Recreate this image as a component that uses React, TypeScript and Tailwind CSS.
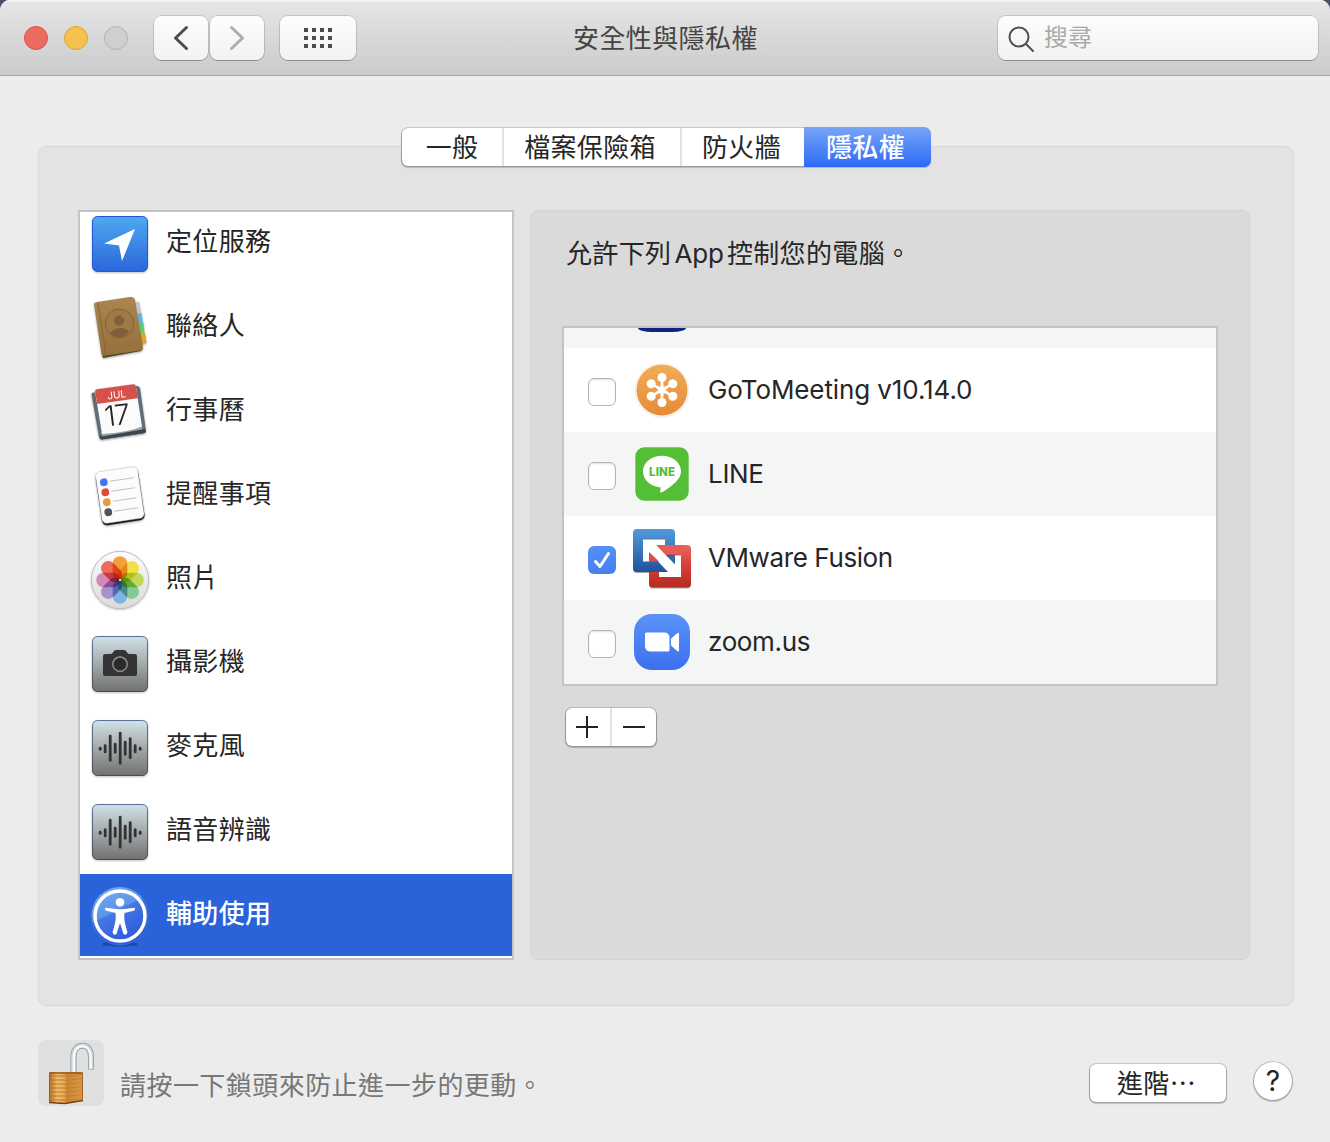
import React from "react";

const FONT = "font-[Inter,'Noto_Sans_CJK_TC',sans-serif]";

function LocationIcon() {
  return (
    <svg width="64" height="64" viewBox="0 0 64 64" className="drop-shadow-[0_1px_1px_rgba(0,0,0,0.25)]">
      <defs>
        <linearGradient id="loc" x1="0" y1="0" x2="0" y2="1">
          <stop offset="0" stopColor="#4fa9ef" />
          <stop offset="1" stopColor="#2a66dc" />
        </linearGradient>
      </defs>
      <rect x="4.500" y="4.500" width="55" height="55" rx="5" fill="url(#loc)" stroke="#2358cc" />
      <path d="M47 17 L16 31.500 L31 33.500 L34 49 Z" fill="#fff" />
    </svg>
  );
}

function ContactsIcon() {
  return (
    <svg width="64" height="64" viewBox="0 2 64 64" className="drop-shadow-[0_1px_1px_rgba(0,0,0,0.35)]">
      <defs>
        <linearGradient id="book" x1="0" y1="0" x2="0" y2="1">
          <stop offset="0" stopColor="#ab8650" />
          <stop offset="1" stopColor="#956f3c" />
        </linearGradient>
      </defs>
      <path d="M44 8 L51 8 L53 19 L48 21 Z" fill="#c3c6c3" />
      <path d="M46 20 L53.500 19 L55 29 L48 31 Z" fill="#5fb4df" />
      <path d="M48 30 L55.500 29 L56.500 39 L50 41 Z" fill="#62cc62" />
      <path d="M49 41 L57 39 L58.500 49 L51 51 Z" fill="#e7a02c" />
      <path d="M14 61 L15 64 L53 57 Q55 56 54 52 Z" fill="#5a4224" />
      <path d="M6 10 Q6 8.500 9 8 L42 3 Q46 2.500 47 6 L55 53 Q55 56 52 56.500 L15 62 Q14 62 13.500 60 Z" fill="url(#book)" />
      <path d="M10 9 L18 61" stroke="#876335" strokeWidth="1" />
      <circle cx="31.500" cy="29.300" r="14.300" fill="#a07a45" stroke="#80603a" strokeWidth="1" />
      <circle cx="31" cy="26.500" r="5" fill="#80603a" />
      <path d="M22 39 Q26 34 32 34 Q37 33.500 41 37.500 Q37 43.500 31.500 43.500 Q26 43.500 22 39Z" fill="#80603a" />
    </svg>
  );
}

function CalendarIcon() {
  return (
    <svg width="64" height="64" viewBox="0 0 64 64" className="drop-shadow-[0_1px_1px_rgba(0,0,0,0.4)]">
      <path d="M3.500 14 Q3.500 12.500 6 12.500 L48 6 Q51 5.500 52 8 L58 51 Q58 53 55.500 53.300 L14 59.500 Q11.500 59.500 11 57 Z" fill="#5f6d76" />
      <path d="M12 55.500 L57 49 L57.800 51 Q58 53 55.500 53.300 L14 59.500 Q12.500 59.500 12 58 Z" fill="#3d464c" />
      <path d="M13 52 L54 46 L54.500 49.500 L14 56.500 Z" fill="#9aa0a2" />
      <path d="M7 11 Q7 9.700 9 9.300 L45.500 4.200 Q47.500 4.200 47.800 6 L54 46.500 Q40 52.500 14 54 Z" fill="#fbfbfb" />
      <path d="M7 11 Q7 9.700 9 9.300 L45.500 4.200 Q47.500 4.200 47.800 6 L49.800 18.300 L9.300 24 Z" fill="#d4524b" />
      <text x="28.700" y="18.300" transform="rotate(-7 29 15)" fontSize="10" fill="#fff" textAnchor="middle" className={FONT}>JUL</text>
      <text x="29" y="45" transform="rotate(-7 30 36)" fontSize="28" fill="#222" textAnchor="middle" letterSpacing="-1" className={FONT + " font-light"}>17</text>
    </svg>
  );
}

function RemindersIcon() {
  const dots = ["#3f78f2", "#dd4b39", "#e69b38", "#4d545e"];
  return (
    <svg width="64" height="64" viewBox="0 0 64 64" className="drop-shadow-[0_1px_1px_rgba(0,0,0,0.35)]">
      <g transform="rotate(-8.500 32 32)">
        <rect x="10.500" y="7.500" width="43" height="51.500" rx="5" fill="#1c1c1c" />
        <rect x="10.800" y="5" width="42.400" height="52" rx="4.500" fill="#fcfcfc" stroke="#bbb" strokeWidth="0.400" />
        {dots.map((c, i) => (
          <g key={c}>
            <circle cx="18" cy={16 + i * 10.100} r="3.900" fill={c} />
            <path d={`M24 ${16 + i * 10.100}h24`} stroke="#c2c2c2" strokeWidth="1" />
          </g>
        ))}
      </g>
    </svg>
  );
}

function PhotosIcon() {
  const petals = ["#f2a03c", "#f0e04a", "#c1d95a", "#84c896", "#7fb2e5", "#a793cf", "#d38ab8", "#ee6a5c"];
  return (
    <svg width="64" height="64" viewBox="0 0 64 64" className="drop-shadow-[0_1px_1px_rgba(0,0,0,0.2)]">
      <defs>
        <linearGradient id="ph" x1="0" y1="0" x2="0" y2="1">
          <stop offset="0" stopColor="#fdfdfd" />
          <stop offset="1" stopColor="#d9d9d9" />
        </linearGradient>
      </defs>
      <circle cx="32" cy="32" r="28.700" fill="url(#ph)" stroke="#bdbdbd" />
      <g className="isolate">
        {petals.map((c, i) => (
          <rect key={c} x="24.700" y="8.200" width="14.600" height="23.800" rx="7.300" fill={c} transform={`rotate(${i * 45} 32 32)`} className="mix-blend-multiply" />
        ))}
      </g>
      <circle cx="32" cy="32" r="1" fill="#fff" />
    </svg>
  );
}

function SteelTile({ children }: { children: React.ReactNode }) {
  return (
    <svg width="64" height="64" viewBox="0 0 64 64" className="drop-shadow-[0_1px_1px_rgba(0,0,0,0.25)]">
      <defs>
        <linearGradient id="steel" x1="0" y1="0" x2="0" y2="1">
          <stop offset="0" stopColor="#d2e1e8" />
          <stop offset="0.500" stopColor="#a3a9ab" />
          <stop offset="1" stopColor="#717171" />
        </linearGradient>
        <linearGradient id="steelEdge" x1="0" y1="0" x2="0" y2="1">
          <stop offset="0" stopColor="#5c7399" />
          <stop offset="1" stopColor="#4c4c4c" />
        </linearGradient>
      </defs>
      <rect x="4.500" y="4.500" width="55" height="55" rx="5" fill="url(#steel)" stroke="url(#steelEdge)" />
      {children}
    </svg>
  );
}

function CameraIcon() {
  return (
    <SteelTile>
      <path d="M17 22 H22 Q24 22 25 20.500 L26 19 Q26.500 18 28 18 H36 Q37.500 18 38 19 L39 20.500 Q40 22 42 22 H47 Q49 22 49 24 V42 Q49 44 47 44 H17 Q15 44 15 42 V24 Q15 22 17 22 Z" fill="#343434" />
      <circle cx="32" cy="32.200" r="7.200" fill="#2c2c2c" stroke="#8d9296" strokeWidth="1.500" />
    </SteelTile>
  );
}

function WaveIcon() {
  const bars = [4, 9, 27, 11, 33, 15, 22, 9, 4];
  return (
    <SteelTile>
      {bars.map((h, i) => (
        <rect key={i} x={10.800 + i * 5} y={32.800 - h / 2 - (i > 1 && i < 7 ? 0.600 : 0)} width="2.800" height={h} rx="1.400" fill="#333" />
      ))}
    </SteelTile>
  );
}

function AccessibilityIcon() {
  return (
    <svg width="64" height="64" viewBox="0 0 64 64">
      <defs>
        <linearGradient id="acc" x1="0" y1="0" x2="0.500" y2="1">
          <stop offset="0" stopColor="#79b2f0" />
          <stop offset="0.500" stopColor="#5c93ea" />
          <stop offset="0.520" stopColor="#4577e4" />
          <stop offset="1" stopColor="#2f59dc" />
        </linearGradient>
      </defs>
      <ellipse cx="32" cy="60" rx="18" ry="2.500" fill="#1c48ac" />
      <circle cx="32" cy="32" r="29.500" fill="#3469cf" />
      <circle cx="32" cy="31.500" r="28.500" fill="url(#acc)" />
      <circle cx="32" cy="32" r="25" fill="none" stroke="#fff" strokeWidth="3.500" />
      <circle cx="32" cy="18.200" r="4.300" fill="#fff" />
      <path d="M17.500 23.800 Q16 26 18.500 26.700 L27.500 29 Q28.500 35 26 43 L24.500 48.500 Q26 52 28.500 50 L32 39 L35.500 50 Q38 52 39.500 48.500 L38 43 Q35.500 35 36.500 29 L45.500 26.700 Q48 26 46.500 23.800 L36 25 Q32 25.500 28 25 Z" fill="#fff" />
    </svg>
  );
}

function GoToIcon() {
  return (
    <svg width="64" height="64" viewBox="0 0 64 64">
      <defs>
        <linearGradient id="gtm" x1="0" y1="0" x2="0" y2="1">
          <stop offset="0" stopColor="#f0ad55" />
          <stop offset="1" stopColor="#e8893a" />
        </linearGradient>
      </defs>
      <circle cx="32" cy="32.500" r="27.200" fill="#eeeeee" />
      <circle cx="32" cy="32" r="26.500" fill="#fbf5ec" />
      <circle cx="32" cy="32" r="25.500" fill="url(#gtm)" />
      {[0, 60, 120, 180, 240, 300].map((a) => (
        <g key={a} transform={`rotate(${a} 32 32)`} fill="#fff">
          <circle cx="32" cy="19.500" r="4.500" />
          <path d="M31 22h2l1 10h-4z" />
        </g>
      ))}
    </svg>
  );
}

function LineIcon() {
  return (
    <svg width="64" height="64" viewBox="0 0 64 64">
      <rect x="5.300" y="5.300" width="53.400" height="53.400" rx="9" fill="#54bf36" />
      <path d="M32 13.800 C42.500 13.800 51 20.500 51 29.500 C51 34 48 38.500 43 42.500 C39 46 35 48.500 31.500 50.500 Q29.800 51 30.200 49 L30.700 45.500 C20.500 44.500 13 38 13 29.500 C13 20.500 21.500 13.800 32 13.800 Z" fill="#fff" />
      <text x="32" y="33.700" textAnchor="middle" fontSize="11.500" fontWeight="800" fill="#54bf36" textLength="26" className={FONT}>LINE</text>
    </svg>
  );
}

function FusionIcon() {
  return (
    <svg width="64" height="64" viewBox="-2 -2 64 64" className="drop-shadow-[0_1px_0.500px_rgba(0,0,0,0.35)]">
      <defs>
        <linearGradient id="vb" x1="0" y1="0" x2="0" y2="1">
          <stop offset="0" stopColor="#539bdc" />
          <stop offset="1" stopColor="#1f529c" />
        </linearGradient>
        <linearGradient id="vr" x1="0" y1="0" x2="0" y2="1">
          <stop offset="0" stopColor="#ec6560" />
          <stop offset="0.500" stopColor="#d33f38" />
          <stop offset="1" stopColor="#b42a21" />
        </linearGradient>
      </defs>
      <path d="M10 10H34V35H10ZM26 26H50V50H26Z" fill="#fff" />
      <path d="M24 17H55a4 4 0 0 1 4 4V55.500a4 4 0 0 1-4 4H21a4 4 0 0 1-4-4V24L27 34V49H49V27H33Z" fill="url(#vr)" />
      <path d="M5 1H39a4 4 0 0 1 4 4V37L33 27V11H11V33.500H26L36 44H5a4 4 0 0 1-4-4V5a4 4 0 0 1 4-4Z" fill="url(#vb)" />
      <path d="M24 17H50V27H33Z" fill="#e65c56" />
      <path d="M11 11.300H33M33 27.200H49" stroke="#1b3052" strokeOpacity="0.500" strokeWidth="0.800" />
      <path d="M17 24 L24 17 L43.500 37 L42 40 L40 43 L36.500 43.700Z" fill="#fff" />
      <path d="M17 24 L27 33.500 H17 Z" fill="#dc4c46" />
    </svg>
  );
}

function ZoomIcon() {
  return (
    <svg width="64" height="64" viewBox="0 0 64 64">
      <defs>
        <linearGradient id="zm" x1="0" y1="0" x2="0" y2="1">
          <stop offset="0" stopColor="#5a92f7" />
          <stop offset="1" stopColor="#3c70ee" />
        </linearGradient>
      </defs>
      <rect x="4" y="4" width="56" height="56" rx="18" fill="url(#zm)" />
      <path d="M16.500 22.500 H34 Q39.500 22.500 39.500 28 V40 Q39.500 41.500 38 41.500 H21 Q15 41.500 15 36 V24 Q15 22.500 16.500 22.500Z" fill="#fff" />
      <path d="M41 29.500 Q41 28.500 42 27.800 L47.500 23 Q49 22.200 49 23.800 V40.500 Q49 42 47.500 41.200 L42 36.500 Q41 35.500 41 34.500Z" fill="#fff" />
    </svg>
  );
}

function LockIcon() {
  return (
    <svg width="66" height="66" viewBox="0 0 66 66">
      <defs>
        <linearGradient id="brass" x1="0" y1="0" x2="1" y2="0">
          <stop offset="0" stopColor="#b86f24" />
          <stop offset="0.250" stopColor="#f3bd68" />
          <stop offset="0.450" stopColor="#e9a94f" />
          <stop offset="0.520" stopColor="#c88533" />
          <stop offset="1" stopColor="#d99a48" />
        </linearGradient>
      </defs>
      <path d="M35.500 33 V17 C35.500 9.500 39 5.800 44.500 5.800 C50 5.800 53 10 53 17 V29.500" fill="none" stroke="#8b979d" strokeWidth="6" />
      <path d="M35.500 33 V17 C35.500 9.500 39 5.800 44.500 5.800 C50 5.800 53 10 53 17 V29" fill="none" stroke="#cdd7db" strokeWidth="4.600" />
      <path d="M35.800 32 V18 C36 10.500 39 6.500 44.500 6 C50 6.500 52.500 10 52.700 17 V28.500" fill="none" stroke="#fafcfc" strokeWidth="2.200" />
      <path d="M11 33 Q11 32 12.500 32 H43 Q45 32 45 33.500 V60.500 L27 63.500 L11 62.500 Z" fill="url(#brass)" />
      {[36, 40, 44, 48, 52, 56, 60].map((y) => (
        <g key={y}>
          <path d={`M11 ${y}H27`} stroke="#9c5c1b" strokeWidth="1.200" strokeOpacity="0.550" />
          <path d={`M27 ${y + 0.500}L45 ${y - 1.500}`} stroke="#9c5c1b" strokeWidth="0.700" strokeOpacity="0.400" />
        </g>
      ))}
      <path d="M11.500 33H44.500" stroke="#9a541c" strokeWidth="1.400" />
      <path d="M11 62.500 L27 63.500 L45 60.500" fill="none" stroke="#7e3c12" strokeWidth="1.400" />
      <path d="M11.500 33V62M44.500 33V60" stroke="#9a541c" strokeWidth="0.800" />
    </svg>
  );
}

const categories = [
  { label: "定位服務", icon: <LocationIcon /> },
  { label: "聯絡人", icon: <ContactsIcon /> },
  { label: "行事曆", icon: <CalendarIcon /> },
  { label: "提醒事項", icon: <RemindersIcon /> },
  { label: "照片", icon: <PhotosIcon /> },
  { label: "攝影機", icon: <CameraIcon /> },
  { label: "麥克風", icon: <WaveIcon /> },
  { label: "語音辨識", icon: <WaveIcon /> },
  { label: "輔助使用", icon: <AccessibilityIcon />, selected: true },
];

const apps = [
  { label: "GoToMeeting v10.14.0", icon: <GoToIcon />, tracking: "tracking-[-0.1px]" },
  { label: "LINE", icon: <LineIcon />, tracking: "tracking-[-0.3px]" },
  { label: "VMware Fusion", icon: <FusionIcon />, checked: true, tracking: "tracking-[-0.4px]" },
  { label: "zoom.us", icon: <ZoomIcon />, tracking: "tracking-[-0.35px]" },
];

const BUTTON = "bg-white shadow-[0_0_0_1px_rgba(0,0,0,0.14),0_1px_1px_1px_rgba(0,0,0,0.2)]";
const TOOL = "flex h-[44px] items-center justify-center rounded-[8px] bg-gradient-to-b from-[#fdfdfd] to-[#f2f2f2] shadow-[0_0_0_1px_rgba(0,0,0,0.13),0_1px_0_0_rgba(0,0,0,0.22)]";

function Checkbox({ checked }: { checked?: boolean }) {
  return checked ? (
    <span className="flex size-[28px] items-center justify-center rounded-[6px] bg-gradient-to-b from-[#5590f6] to-[#467ff3]">
      <svg width="28" height="28" viewBox="0 0 28 28" fill="none" stroke="#fff" strokeWidth="3" strokeLinecap="round" strokeLinejoin="round">
        <path d="M7.500 15.500 L12 20.500 L20.500 7.500" />
      </svg>
    </span>
  ) : (
    <span className="size-[28px] rounded-[6px] border border-[#b5b5b5] bg-white shadow-[inset_0_1px_2px_rgba(0,0,0,0.12)]" />
  );
}

export default function App() {
  return (
    <div className="h-[1142px] w-[1330px] bg-[#4a4f66]">
      <div className={`flex h-full flex-col overflow-hidden rounded-t-[10px] bg-[#ececec] text-[26px] text-[#262626] ${FONT}`}>
        <header className="flex h-[76px] shrink-0 items-center border-b border-[#a6a6a6] bg-gradient-to-b from-[#e6e6e6] to-[#cbcbcb] pt-px pr-[12px] pl-[24px] shadow-[inset_0_2px_0_#f3f3f3]">
          <div className="flex gap-[16px]">
            <span className="size-[24px] rounded-full border border-[#dc5147] bg-[#ec6b60]" />
            <span className="size-[24px] rounded-full border border-[#dba138] bg-[#f5c250]" />
            <span className="size-[24px] rounded-full border border-[#b2b2b2] bg-[#cfcfcf]" />
          </div>
          <div className="ml-[26px] flex gap-[2px]">
            <button className={`${TOOL} w-[54px]`}>
              <svg width="24" height="28" viewBox="0 0 24 28" fill="none" stroke="#4c4c4c" strokeWidth="3" strokeLinecap="round" strokeLinejoin="round">
                <path d="M17.500 3.500 L6.500 14 L17.500 24.500" />
              </svg>
            </button>
            <button className={`${TOOL} w-[54px]`}>
              <svg width="24" height="28" viewBox="0 0 24 28" fill="none" stroke="#adadad" strokeWidth="3" strokeLinecap="round" strokeLinejoin="round">
                <path d="M6.500 3.500 L17.500 14 L6.500 24.500" />
              </svg>
            </button>
          </div>
          <button className={`${TOOL} ml-[16px] w-[76px]`}>
            <span className="grid grid-cols-4 gap-[4px]">
              {Array.from({ length: 12 }, (_, i) => (
                <span key={i} className="size-[4px] bg-[#4c4c4c]" />
              ))}
            </span>
          </button>
          <h1 className="ml-[217px] w-[190px] text-[26px] tracking-[0.4px] whitespace-nowrap text-[#444]">安全性與隱私權</h1>
          <div className={`${TOOL} ml-auto w-[320px] !justify-start pl-[9px]`}>
            <svg width="28" height="28" viewBox="0 0 28 28" fill="none" stroke="#4f4f4f" strokeWidth="2" strokeLinecap="round">
              <circle cx="12" cy="13" r="9.500" />
              <path d="M19 20 L26 27" />
            </svg>
            <span className="ml-[9px] text-[24px] text-[#a9a9a9]">搜尋</span>
          </div>
        </header>

        <main className="mx-[36px] mt-[70px] ml-[38px] flex h-[860px] flex-col rounded-[8px] border border-[#d9d9d9] bg-[#e3e3e3]">
          <nav className={`mx-auto -mt-[19px] flex h-[38px] w-[528px] shrink-0 rounded-[6px] leading-[39px] tracking-[0.3px] ${BUTTON}`}>
            <span className="w-[102px] border-r-2 border-[#e2e2e2] text-center">一般</span>
            <span className="w-[178px] border-r-2 border-[#e2e2e2] pr-[4px] text-center">檔案保險箱</span>
            <span className="w-[122px] pr-[3px] text-center">防火牆</span>
            <span className="-my-px -mr-px w-[127px] rounded-r-[7px] bg-gradient-to-b from-[#78a5f6] to-[#2a68f6] pr-[4px] text-center leading-[41px] font-medium text-white">隱私權</span>
          </nav>

          <div className="mt-[44px] flex gap-[16px] pl-[39px]">
            <aside className="h-[750px] w-[436px] overflow-hidden border-2 border-[#c3c3c3] bg-white">
              <ul className="-mt-[10px]">
                {categories.map((c) => (
                  <li
                    key={c.label}
                    className={c.selected ? "flex h-[82px] items-center bg-[#2962d9] pt-[2px] pl-[8px] font-medium text-white" : "flex h-[84px] items-center pl-[8px]"}
                  >
                    {c.icon}
                    <span className="ml-[14px] -translate-y-[3px] tracking-[0.35px]">{c.label}</span>
                  </li>
                ))}
              </ul>
            </aside>

            <section className="h-[750px] w-[720px] rounded-[8px] border border-[#d2d2d2] bg-[#dadada] px-[31px]">
              <p className="mt-[23px] h-[40px] pl-[4px] leading-[40px] tracking-[0.35px] whitespace-nowrap">
                允許下列<span className="mr-[3px] ml-[3px] tracking-[-0.1px]">App</span>控制您的電腦。
              </p>
              <div className="mt-[52px] h-[360px] w-[656px] overflow-hidden border-2 border-[#c3c3c3] bg-white">
                <div className="h-[20px] bg-[#f4f6f5] pl-[74px]">
                  <div className="h-[4px] w-[48px] rounded-[0_0_14px_14px/0_0_4px_4px] bg-[#10247f]" />
                </div>
                {apps.map((a) => (
                  <div key={a.label} className="flex h-[84px] items-center pl-[24px] even:bg-white odd:bg-[#f4f6f5]">
                    <span className="mt-[4px] flex"><Checkbox checked={a.checked} /></span>
                    <span className="ml-[14px]">{a.icon}</span>
                    <span className={`ml-[14px] -translate-y-px whitespace-nowrap ${a.tracking}`}>{a.label}</span>
                  </div>
                ))}
              </div>
              <div className={`mt-[22px] ml-[4px] flex h-[38px] w-[90px] rounded-[6px] ${BUTTON}`}>
                <button className="flex w-[46px] items-center justify-center border-r-2 border-[#e2e2e2] pr-[2px]">
                  <svg width="22" height="22" viewBox="0 0 22 22" stroke="#222" strokeWidth="2"><path d="M0 11H22M11 0V22" /></svg>
                </button>
                <button className="flex w-[44px] items-center justify-center">
                  <svg width="22" height="22" viewBox="0 0 22 22" stroke="#222" strokeWidth="2"><path d="M0 11H22" /></svg>
                </button>
              </div>
            </section>
          </div>
        </main>

        <footer className="mt-[34px] flex pl-[38px]">
          <div className="size-[66px] rounded-[8px] bg-[#e0e0e0]">
            <LockIcon />
          </div>
          <p className="mt-[26px] ml-[16px] h-[40px] leading-[40px] tracking-[0.45px] whitespace-nowrap text-[#777]">請按一下鎖頭來防止進一步的更動。</p>
          <button className={`mt-[24px] mr-[28px] ml-auto h-[38px] w-[136px] rounded-[6px] pr-[3px] leading-[36px] tracking-[0.4px] ${BUTTON}`}>
            進階<span className="font-['Noto_Sans_CJK_TC']">⋯</span>
          </button>
          <button className={`mt-[22px] mr-[38px] size-[38px] rounded-full text-[28px] leading-[38px] ${BUTTON}`}>?</button>
        </footer>
      </div>
    </div>
  );
}
